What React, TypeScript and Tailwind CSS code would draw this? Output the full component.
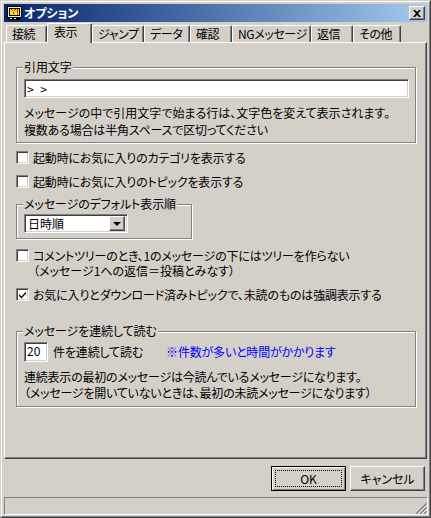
const tabs = [
  { label: "接続", w: "w-[41px]" },
  { label: "表示", w: "w-[45px]", active: true },
  { label: "ジャンプ", w: "w-[52px]" },
  { label: "データ", w: "w-[46px]" },
  { label: "確認", w: "w-[42px]" },
  { label: "NGメッセージ", w: "w-[79px]" },
  { label: "返信", w: "w-[42px]" },
  { label: "その他", w: "w-[48px]" },
];

const sunken =
  "border border-t-[#808080] border-l-[#808080] border-r-white border-b-white shadow-[inset_1px_1px_0_#404040,inset_-1px_-1px_0_#d4d0c8]";
const raised =
  "border border-t-white border-l-white border-r-[#404040] border-b-[#404040] shadow-[inset_-1px_-1px_0_#808080]";

function AppIcon() {
  return (
    <svg width="15" height="15" viewBox="0 0 15 15" className="shrink-0" shapeRendering="crispEdges">
      <rect x="0" y="0" width="15" height="12" fill="#000" />
      <rect x="1" y="1" width="13" height="10" fill="#e8e8e8" />
      <rect x="2" y="2" width="11" height="8" fill="#000" />
      <rect x="3" y="3" width="9" height="6" fill="#ffe800" />
      <path d="M4 3h1v1h1v2h1V4h1V3h1v1H8v1H7v3H6V5H5V4H4zM10 3h1v4h-1zM10 8h1v1h-1z" fill="#e00000" />
      <rect x="2" y="12" width="11" height="2" fill="#000" />
      <rect x="3" y="12" width="2" height="1" fill="#fff" />
      <rect x="7" y="12" width="2" height="1" fill="#fff" />
    </svg>
  );
}

function Group({ title, className, children }: { title: string; className: string; children: React.ReactNode }) {
  return (
    <div
      className={`relative border border-[#808080] shadow-[inset_1px_1px_0_#fff,1px_1px_0_#fff] ${className}`}
    >
      <span className="absolute left-[6px] top-[-8px] bg-[#d4d0c8] px-px leading-[14px] whitespace-nowrap tracking-[-0.1px]">
        {title}
      </span>
      {children}
    </div>
  );
}

function Check({ label, checked, className }: { label: string; checked?: boolean; className: string }) {
  return (
    <div className={`flex h-[13px] items-center ${className}`}>
      <span className={`flex h-[13px] w-[13px] shrink-0 items-center justify-center bg-white ${sunken}`}>
        {checked && (
          <svg width="9" height="9" viewBox="0 0 9 9">
            <path d="M1 4l2.500 2.500L8 1.500v2L3.500 8.500 1 6z" fill="#000" />
          </svg>
        )}
      </span>
      <span className="ml-[4px] whitespace-nowrap leading-[14px] tracking-[-0.17px]">{label}</span>
    </div>
  );
}

export default function App() {
  return (
    <div
      className="h-[518px] w-[431px] overflow-hidden border border-t-[#d4d0c8] border-l-[#d4d0c8] border-r-[#404040] border-b-[#404040] bg-[#d4d0c8] text-[12px] text-black [font-family:'Noto_Sans_CJK_JP','Liberation_Sans',sans-serif] [font-feature-settings:'palt']"
    >
      <div className="flex h-full flex-col border border-t-white border-l-white border-r-[#808080] border-b-[#808080] p-[2px]">
        {/* Title bar */}
        <div className="flex h-[18px] shrink-0 items-center bg-gradient-to-r from-[#0a246a] to-[#a6caf0] pl-[3px] pr-[2px]">
          <AppIcon />
          <span className="ml-[2px] font-bold leading-none text-white">オプション</span>
          <button className={`ml-auto flex h-[14px] w-[16px] items-center justify-center bg-[#d4d0c8] ${raised}`}>
            <svg width="8" height="7" viewBox="0 0 8 7">
              <path d="M0 0h2l2 2 2-2h2L5 3.500 8 7H6L4 5 2 7H0l3-3.500z" fill="#000" />
            </svg>
          </button>
        </div>

        {/* Tabs */}
        <div className="relative z-10 flex h-[20px] shrink-0 items-end pl-[2px] tracking-[-0.4px]">
          {tabs.map((t) =>
            t.active ? (
              <div
                key={t.label}
                className={`-mb-px flex h-[20px] ${t.w} items-center rounded-t-[2px] border-l border-r border-t border-t-white border-l-white border-r-[#404040] bg-[#d4d0c8] pb-[3px] pl-[6px] shadow-[inset_-1px_0_0_#808080]`}
              >
                {t.label}
              </div>
            ) : (
              <div
                key={t.label}
                className={`flex h-[17px] ${t.w} items-center rounded-t-[2px] border-l border-r border-t border-t-white border-l-white border-r-[#404040] pl-[5px] shadow-[inset_-1px_0_0_#808080]`}
              >
                {t.label}
              </div>
            ),
          )}
        </div>

        {/* Panel */}
        <div className="h-[417px] shrink-0 border border-t-white border-l-white border-r-[#404040] border-b-[#404040] pl-[11px] pt-[24px] shadow-[inset_-1px_-1px_0_#808080]">
          <Group title="引用文字" className="h-[76px] w-[400px] pl-[7px] pt-[11px]">
            <div className={`flex h-[19px] w-[385px] items-center bg-white pl-[2px] ${sunken}`}>
              <span className="leading-none [word-spacing:4px]">&gt; &gt;</span>
            </div>
            <p className="mt-[6px] whitespace-nowrap leading-[17px]">
              メッセージの中で引用文字で始まる行は、文字色を変えて表示されます。
              <br />
              <span className="tracking-[-0.18px]">複数ある場合は半角スペースで区切ってください</span>
            </p>
          </Group>

          <Check label="起動時にお気に入りのカテゴリを表示する" className="mt-[8px]" />
          <Check label="起動時にお気に入りのトピックを表示する" className="mt-[11px]" />

          <Group title="メッセージのデフォルト表示順" className="mt-[16px] h-[35px] w-[176px] pl-[7px] pt-[9px]">
            <div className={`flex h-[19px] w-[104px] items-center bg-white p-[2px] ${sunken}`}>
              <span className="flex-1 pl-[1px] leading-none">日時順</span>
              <span className={`flex h-[15px] w-[16px] items-center justify-center bg-[#d4d0c8] ${raised}`}>
                <span className="h-0 w-0 border-x-[4px] border-t-[4px] border-x-transparent border-t-black" />
              </span>
            </div>
          </Group>

          <Check label="コメントツリーのとき、1のメッセージの下にはツリーを作らない" className="mt-[10px]" />
          <p className="mt-[2px] pl-[17px] leading-[14px]">（メッセージ1への返信＝投稿とみなす）</p>
          <Check checked label="お気に入りとダウンロード済みトピックで、未読のものは強調表示する" className="mt-[10px]" />

          <Group title="メッセージを連続して読む" className="mt-[30px] h-[76px] w-[400px] pl-[7px] pt-[10px]">
            <div className="flex items-center">
              <div className={`flex h-[20px] w-[24px] items-center bg-white pl-[2px] pb-[3px] ${sunken}`}>
                <span className="leading-none">20</span>
              </div>
              <span className="ml-[5px] leading-[14px] tracking-[-0.15px]">件を連続して読む</span>
              <span className="ml-[23px] leading-[14px] tracking-[-0.2px] text-[#0000ff]">※件数が多いと時間がかかります</span>
            </div>
            <p className="mt-[7px] whitespace-nowrap leading-[16px] tracking-[-0.22px]">
              連続表示の最初のメッセージは今読んでいるメッセージになります。
              <br />
              （メッセージを開いていないときは、最初の未読メッセージになります）
            </p>
          </Group>
        </div>

        {/* Buttons */}
        <div className="mt-[7px] flex shrink-0 justify-end gap-[4px] pr-[2px]">
          <button className="h-[25px] w-[75px] border border-black bg-[#d4d0c8] p-[3px] shadow-[inset_1px_1px_0_#fff,inset_-1px_-1px_0_#808080]">
            <span className="flex h-full w-full items-center justify-center border border-dotted border-black leading-none">
              OK
            </span>
          </button>
          <button className={`h-[25px] w-[75px] bg-[#d4d0c8] leading-none ${raised}`}>キャンセル</button>
        </div>

        {/* Status bar */}
        <div className="relative mt-[6px] h-[17px] shrink-0 border-l border-t border-l-[#808080] border-t-[#808080] shadow-[1px_1px_0_#fff]">
          <svg width="12" height="12" viewBox="0 0 12 12" className="absolute bottom-0 right-0">
            <path d="M12 1L1 12M12 5L5 12M12 9L9 12" stroke="#808080" strokeWidth="1.500" />
            <path d="M12 3L3 12M12 7L7 12M12 11L11 12" stroke="#fff" strokeWidth="1" />
          </svg>
        </div>
      </div>
    </div>
  );
}
